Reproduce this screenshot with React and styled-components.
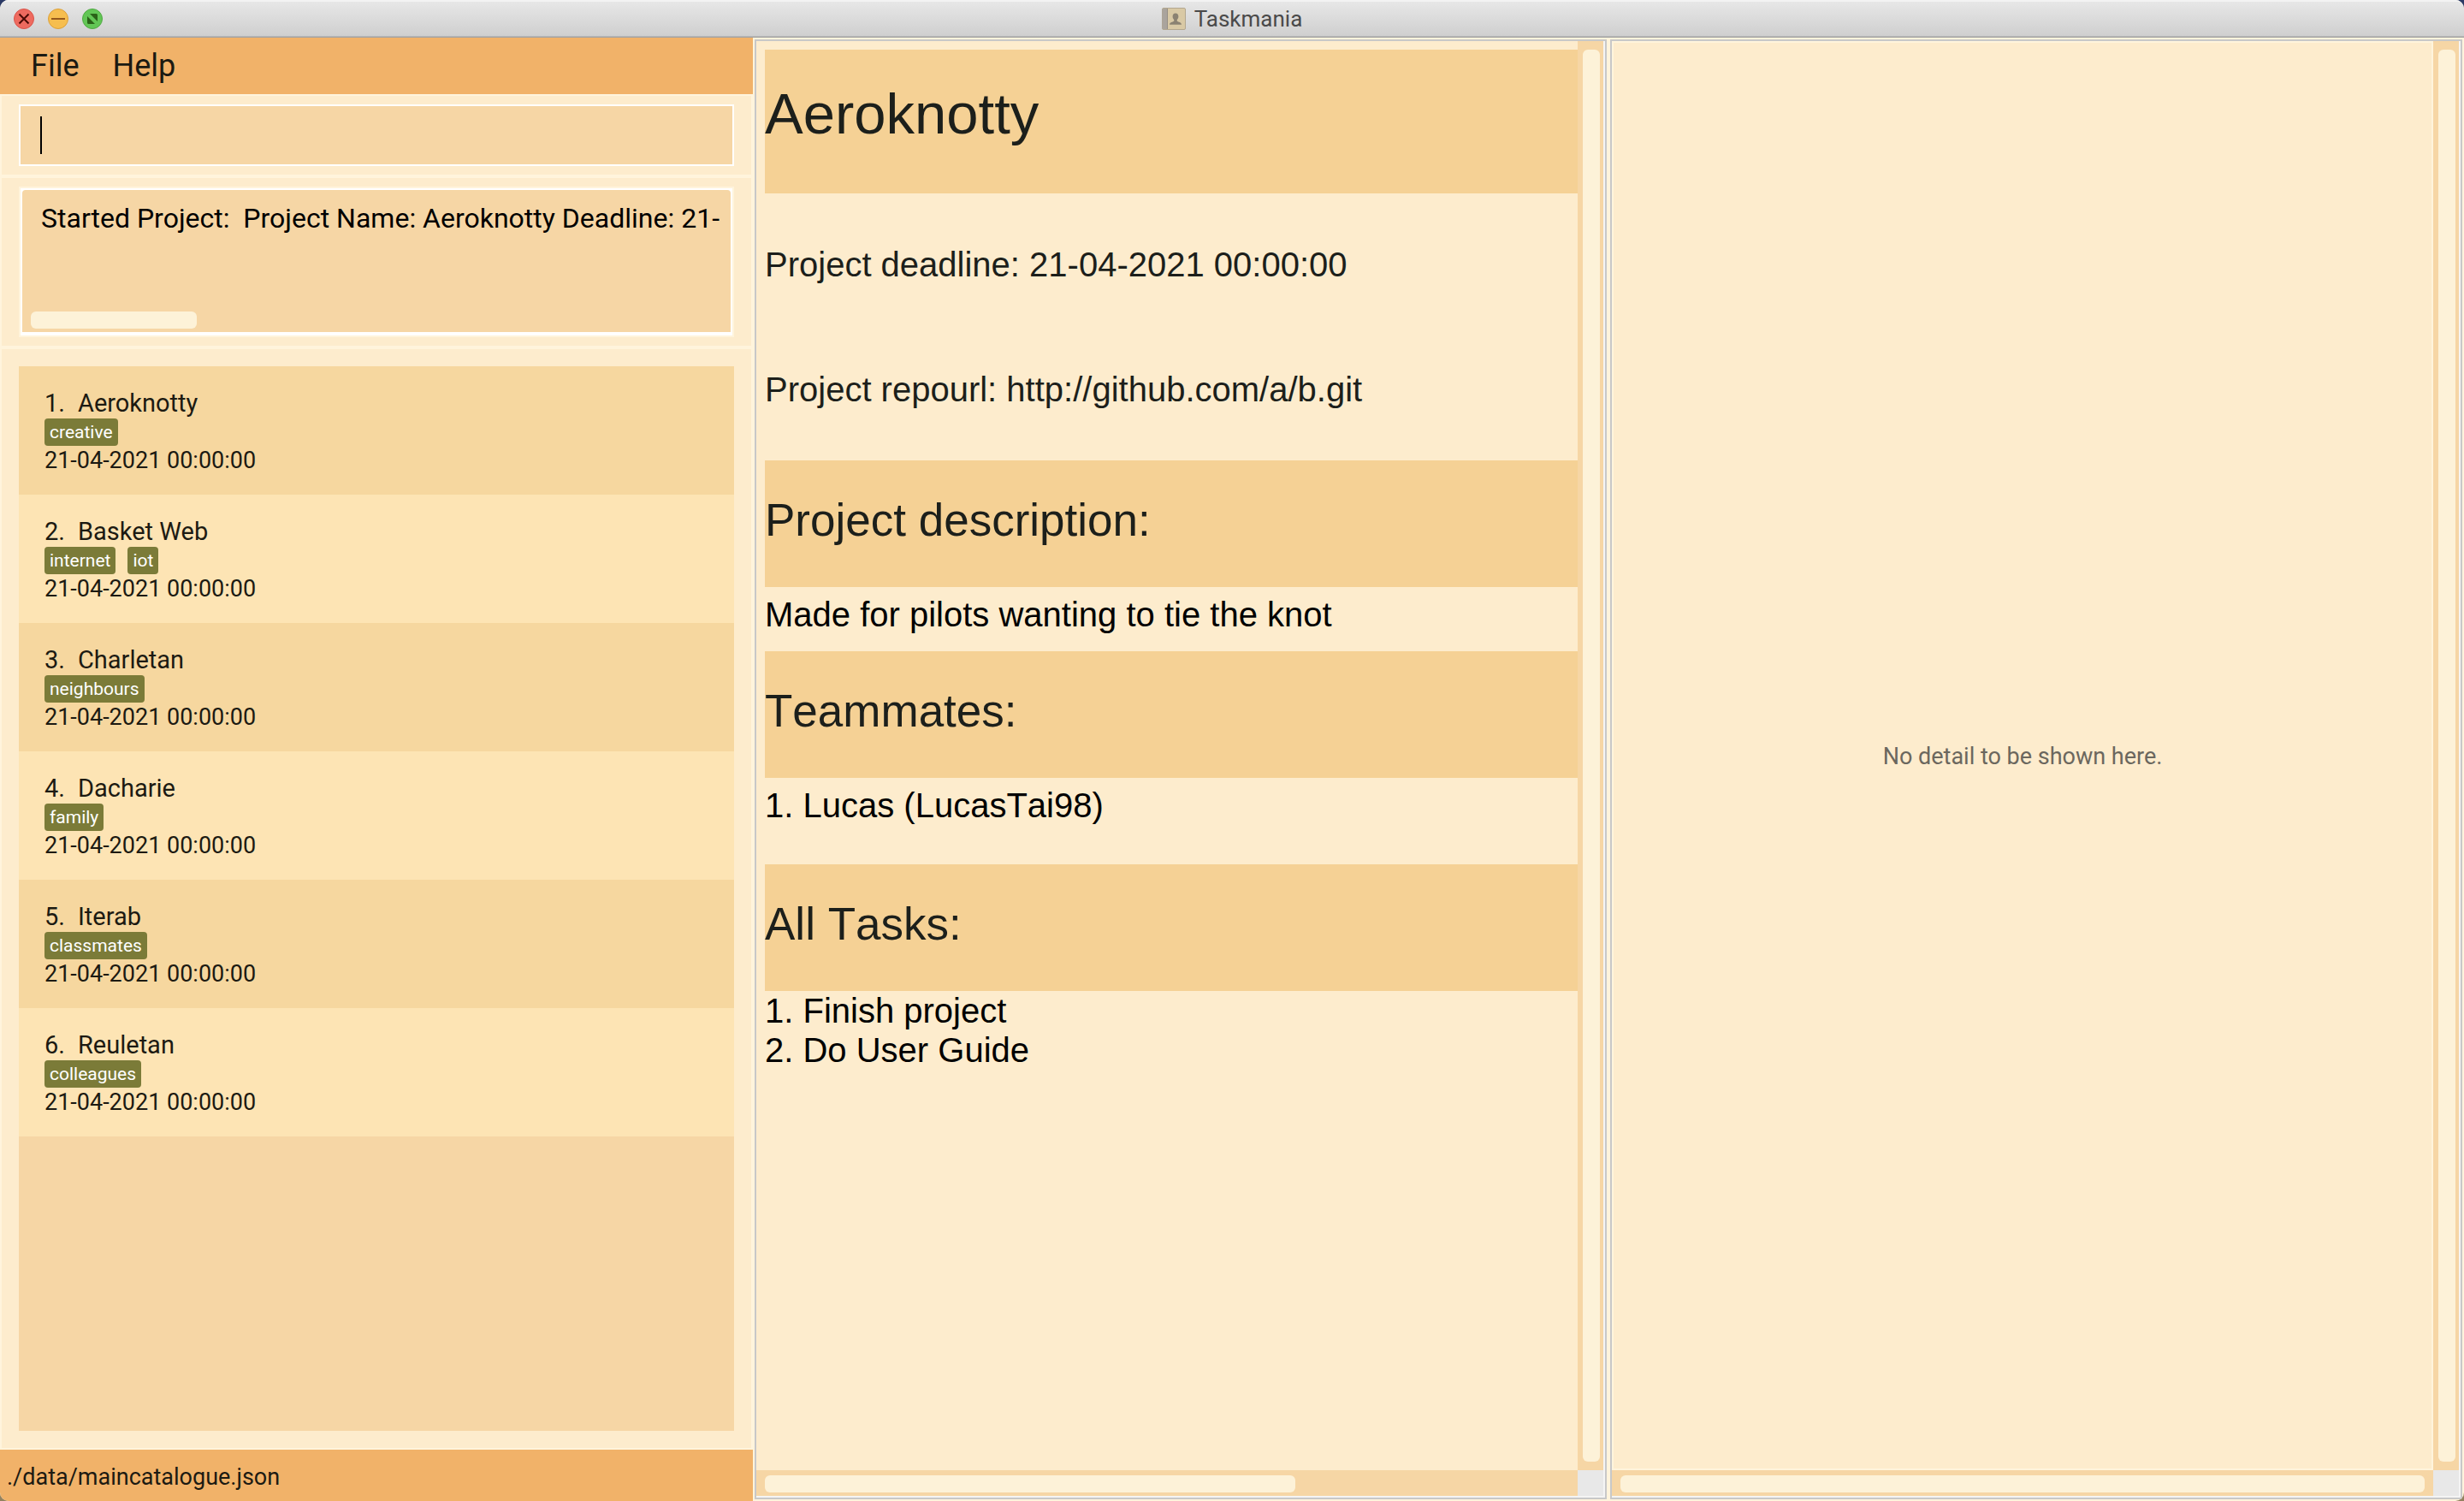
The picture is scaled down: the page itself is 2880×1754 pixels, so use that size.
import React from "react";
import styled, { createGlobalStyle, ThemeProvider } from "styled-components";

const theme = {
  cream: "#fdeccd",
  edge: "#fff4dc",
  thumb: "#fdf2d8",
  track: "#f6d6a5",
  band: "#f5d195",
  rowOdd: "#f6d79f",
  rowEven: "#fde4b4",
  accent: "#f1b269",
  tag: "#7b7b38",
  line: "#c8c8c8",
  ink: "#1c1a12",
  uiFont: 'Roboto, "Liberation Sans", sans-serif',
  docFont: '"Liberation Sans", Arial, sans-serif',
};

const GlobalStyle = createGlobalStyle`
  *, *::before, *::after { box-sizing: border-box; }
  body {
    margin: 0;
    background: linear-gradient(#2b3a66, #93825f);
    font-family: ${theme.uiFont};
    color: ${theme.ink};
  }
`;

/* ---------- window frame ---------- */

const Window = styled.div`
  display: flex;
  flex-direction: column;
  height: 100vh;
  overflow: hidden;
  border-radius: 10px;
  background: ${({ theme }) => theme.edge};
`;

const TitleBar = styled.header`
  display: grid;
  grid-template-columns: 1fr auto 1fr;
  align-items: center;
  flex: none;
  height: 44px;
  padding: 0 16px;
  background: linear-gradient(#e8e8e8, #cecece);
  box-shadow: inset 0 2px 0 #f3f3f3, inset 0 -1px 0 #a2a2a2, inset 0 -2px 0 #b6b6b6;
`;

const WindowControls = styled.div`
  display: flex;
  gap: 16px;
`;

const ControlButton = styled.button`
  width: 24px;
  height: 24px;
  padding: 0;
  border: 1px solid ${({ $rim }) => $rim};
  border-radius: 50%;
  background: ${({ $fill }) => $fill};

  svg {
    display: block;
    width: 22px;
    height: 22px;
  }
`;

const WindowTitle = styled.h1`
  display: flex;
  align-items: center;
  gap: 10px;
  margin: 0;
  font-size: 26px;
  font-weight: 400;
  line-height: 30px;
  color: #4a4a4a;
`;

const Workspace = styled.div`
  display: grid;
  grid-template-columns: 22fr 25fr 25fr;
  flex: 1;
  min-height: 0;
`;

/* ---------- left column ---------- */

const Sidebar = styled.div`
  display: flex;
  flex-direction: column;
  min-width: 0;
  min-height: 0;
`;

const MenuBar = styled.nav`
  display: flex;
  align-items: center;
  gap: 39px;
  flex: none;
  height: 66px;
  padding: 0 36px;
  background: ${({ theme }) => theme.accent};
`;

const MenuButton = styled.button`
  padding: 0;
  border: 0;
  background: none;
  font: 36px/44px ${({ theme }) => theme.uiFont};
  color: ${({ theme }) => theme.ink};
`;

const Section = styled.section`
  display: flex;
  flex-direction: column;
  flex: ${({ $grow }) => ($grow ? "1" : "none")};
  min-height: 0;
  padding: ${({ $grow }) => ($grow ? "20px" : "10px 20px")};
  border: 2px solid ${({ theme }) => theme.edge};
  background: ${({ theme }) => theme.cream};
`;

const CommandField = styled.label`
  display: flex;
  align-items: center;
  height: 72px;
  padding: 0 23px;
  border: 2px solid #fff;
  background: ${({ theme }) => theme.track};
`;

const Caret = styled.span`
  flex: none;
  width: 2px;
  height: 44px;
  background: #000;
`;

const CommandInput = styled.input`
  flex: 1;
  min-width: 0;
  height: 44px;
  padding: 0;
  border: 0;
  outline: 0;
  background: none;
  caret-color: transparent;
  font: 32px/40px ${({ theme }) => theme.uiFont};
`;

const ResultFrame = styled.div`
  height: 176px;
  border: 2px solid ${({ theme }) => theme.edge};
  background: #fff;
`;

const ResultBox = styled.div`
  display: flex;
  flex-direction: column;
  height: 172px;
  border: 2px solid #fff;
  border-bottom-width: 4px;
  border-radius: 6px;
  background: ${({ theme }) => theme.track};
`;

const ResultText = styled.textarea`
  flex: 1;
  min-height: 0;
  padding: 13px 0 0 22px;
  border: 0;
  outline: 0;
  resize: none;
  overflow: hidden;
  white-space: pre;
  background: none;
  font: 32px/40px ${({ theme }) => theme.uiFont};
  color: #000;
`;

const ProjectList = styled.ul`
  flex: 1;
  min-height: 0;
  margin: 0;
  padding: 0;
  overflow: hidden;
  list-style: none;
  background: ${({ theme }) => theme.track};
`;

const ProjectRow = styled.li`
  padding: 26px 30px 22px;
  background: ${({ theme }) => theme.rowOdd};

  &:nth-child(even) {
    background: ${({ theme }) => theme.rowEven};
  }
`;

const ProjectName = styled.div`
  display: flex;
  gap: 15px;
  font-size: 29px;
  line-height: 35px;
`;

const TagList = styled.div`
  display: flex;
  gap: 14px;
`;

const Tag = styled.span`
  padding: 0 6px;
  border-radius: 4px;
  background: ${({ theme }) => theme.tag};
  font-size: 21px;
  line-height: 32px;
  color: #fff;
`;

const Deadline = styled.div`
  font-size: 27px;
  line-height: 35px;
`;

const StatusBar = styled.footer`
  flex: none;
  height: 60px;
  padding: 4px 8px 0;
  background: ${({ theme }) => theme.accent};
  font-size: 27px;
  line-height: 56px;
`;

/* ---------- scrollable panels ---------- */

const Panel = styled.section`
  display: grid;
  grid-template-columns: 1fr 30px;
  grid-template-rows: 1fr 30px;
  min-width: 0;
  min-height: 0;
  margin: 2px;
  padding: 0 2px 2px 0;
  border: 2px solid ${({ theme }) => theme.line};
  background: #f4f4f4;
`;

const ScrollTrack = styled.div`
  display: flex;
  flex-direction: ${({ $vertical }) => ($vertical ? "column" : "row")};
  padding: ${({ $vertical }) => ($vertical ? "10px 4px 10px 6px" : "6px 10px 4px")};
  background: ${({ theme }) => theme.track};
`;

const ScrollThumb = styled.div`
  flex: 0 0 ${({ $size }) => $size}%;
  min-height: 20px;
  border-radius: 6px;
  background: ${({ theme }) => theme.thumb};
`;

const ScrollCorner = styled.div`
  background: #e8e8e8;
`;

const Document = styled.article`
  min-width: 0;
  overflow: hidden;
  padding: 10px 0 10px 10px;
  background: ${({ theme }) => theme.cream};
  font: 40px/46px ${({ theme }) => theme.docFont};
  font-kerning: none;
  color: #000;
`;

const ProjectHeading = styled.h2`
  margin: 0;
  padding: 36px 0 54px;
  background: ${({ theme }) => theme.band};
  font-size: 67px;
  font-weight: 400;
  line-height: 78px;
  color: #1c1f1b;
`;

const Facts = styled.div`
  display: flex;
  flex-direction: column;
  gap: 100px;
  padding: 60px 0;
  color: #1c1f1b;
`;

const Fact = styled.p`
  margin: 0;
`;

const SectionHeading = styled.h3`
  margin: 0;
  padding: 39px 0 47px;
  background: ${({ theme }) => theme.band};
  font-size: 53px;
  font-weight: 400;
  line-height: 62px;
  color: #1c1f1b;
`;

const Description = styled.p`
  margin: 0;
  padding: 9px 0 20px;
`;

const PlainList = styled.ul`
  margin: 0;
  padding: ${({ $spaced }) => ($spaced ? "9px 0 46px" : "0")};
  list-style: none;
`;

const EmptyState = styled.div`
  display: flex;
  align-items: center;
  justify-content: center;
  min-width: 0;
  padding-top: 2px;
  border: 2px solid ${({ theme }) => theme.edge};
  background: ${({ theme }) => theme.cream};
  font-size: 27px;
  line-height: 32px;
  color: #6b675e;
`;

/* ---------- data ---------- */

const projects = [
  { name: "Aeroknotty", tags: ["creative"] },
  { name: "Basket Web", tags: ["internet", "iot"] },
  { name: "Charletan", tags: ["neighbours"] },
  { name: "Dacharie", tags: ["family"] },
  { name: "Iterab", tags: ["classmates"] },
  { name: "Reuletan", tags: ["colleagues"] },
];

const deadline = "21-04-2021 00:00:00";
const teammates = ["Lucas (LucasTai98)"];
const tasks = ["Finish project", "Do User Guide"];

/* ---------- pieces ---------- */

function ContactsIcon() {
  return (
    <svg width="28" height="26" viewBox="0 0 28 26" aria-hidden="true">
      <rect x="0.5" y="0.5" width="27" height="25" rx="1.5" fill="#d9c9a5" stroke="#b3a78f" />
      <path d="M1.5 1H6v24H1.5Q0.5 25 0.5 24V2Q0.5 1 1.5 1z" fill="#aaa49d" />
      <path d="M6.5 1v24" stroke="#958e86" />
      <path
        d="M16 6.500c2.200 0 3.400 1.600 3.400 3.800 0 1.700-.8 3-1.600 3.800v1.700c1.600 1 5 1.200 5.200 3.900H9c.2-2.700 3.600-2.900 5.200-3.900v-1.700c-.8-.8-1.600-2.100-1.600-3.800 0-2.200 1.200-3.800 3.400-3.800z"
        fill="#8b8272"
      />
    </svg>
  );
}

function Scrollable({ horizontal, children, label }) {
  return (
    <Panel aria-label={label}>
      {children}
      <ScrollTrack $vertical>
        <ScrollThumb $size={100} />
      </ScrollTrack>
      <ScrollTrack>
        <ScrollThumb $size={horizontal} />
      </ScrollTrack>
      <ScrollCorner />
    </Panel>
  );
}

function ProjectItem({ index, project }) {
  return (
    <ProjectRow>
      <ProjectName>
        <span>{index}.</span>
        <span>{project.name}</span>
      </ProjectName>
      <TagList>
        {project.tags.map((tag) => (
          <Tag key={tag}>{tag}</Tag>
        ))}
      </TagList>
      <Deadline>{deadline}</Deadline>
    </ProjectRow>
  );
}

export default function App() {
  return (
    <ThemeProvider theme={theme}>
      <GlobalStyle />
      <Window>
        <TitleBar>
          <WindowControls>
            <ControlButton aria-label="Close" $fill="#ee6a5f" $rim="#d9534a">
              <svg viewBox="0 0 22 22">
                <path d="M5.500 5.500l11 11M16.500 5.500l-11 11" stroke="#4c0b06" strokeWidth="2" />
              </svg>
            </ControlButton>
            <ControlButton aria-label="Minimise" $fill="#f6be4f" $rim="#dca03a">
              <svg viewBox="0 0 22 22">
                <path d="M3 11h16" stroke="#96591c" strokeWidth="2" />
              </svg>
            </ControlButton>
            <ControlButton aria-label="Full screen" $fill="#62c655" $rim="#50a943">
              <svg viewBox="0 0 22 22">
                <path d="M8 5h7.500q1.500 0 1.500 1.500V14zM5 8v7.500q0 1.500 1.500 1.500H14z" fill="#2a6218" />
              </svg>
            </ControlButton>
          </WindowControls>
          <WindowTitle>
            <ContactsIcon />
            Taskmania
          </WindowTitle>
        </TitleBar>

        <Workspace>
          <Sidebar>
            <MenuBar>
              <MenuButton>File</MenuButton>
              <MenuButton>Help</MenuButton>
            </MenuBar>
            <Section>
              <CommandField>
                <Caret />
                <CommandInput type="text" aria-label="Command" />
              </CommandField>
            </Section>
            <Section>
              <ResultFrame>
                <ResultBox>
                  <ResultText
                    readOnly
                    wrap="off"
                    aria-label="Result"
                    value="Started Project:  Project Name: Aeroknotty Deadline: 21-"
                  />
                  <ScrollTrack>
                    <ScrollThumb $size={24} />
                  </ScrollTrack>
                </ResultBox>
              </ResultFrame>
            </Section>
            <Section $grow>
              <ProjectList>
                {projects.map((project, i) => (
                  <ProjectItem key={project.name} index={i + 1} project={project} />
                ))}
              </ProjectList>
            </Section>
            <StatusBar>./data/maincatalogue.json</StatusBar>
          </Sidebar>

          <Scrollable horizontal={66} label="Project">
            <Document>
              <ProjectHeading>Aeroknotty</ProjectHeading>
              <Facts>
                <Fact>Project deadline: {deadline}</Fact>
                <Fact>Project repourl: http://github.com/a/b.git</Fact>
              </Facts>
              <SectionHeading>Project description:</SectionHeading>
              <Description>Made for pilots wanting to tie the knot</Description>
              <SectionHeading>Teammates:</SectionHeading>
              <PlainList $spaced>
                {teammates.map((name, i) => (
                  <li key={name}>{`${i + 1}. ${name}`}</li>
                ))}
              </PlainList>
              <SectionHeading>All Tasks:</SectionHeading>
              <PlainList>
                {tasks.map((task, i) => (
                  <li key={task}>{`${i + 1}. ${task}`}</li>
                ))}
              </PlainList>
            </Document>
          </Scrollable>

          <Scrollable horizontal={100} label="Details">
            <EmptyState>No detail to be shown here.</EmptyState>
          </Scrollable>
        </Workspace>
      </Window>
    </ThemeProvider>
  );
}
